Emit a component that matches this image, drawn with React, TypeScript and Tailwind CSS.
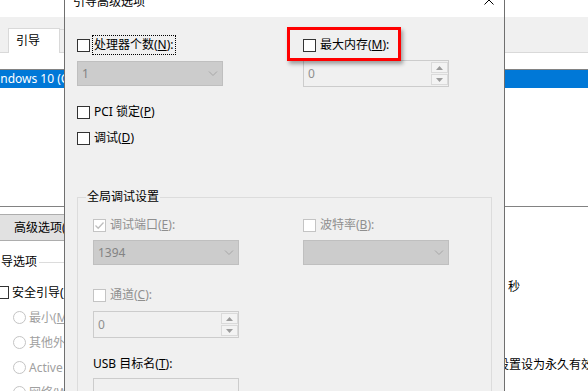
import type { ReactNode } from "react";

function Box({ disabled = false, checked = false }: { disabled?: boolean; checked?: boolean }) {
  return (
    <span
      className={`flex h-[13px] w-[13px] shrink-0 items-center justify-center border bg-white ${
        disabled ? "border-[#c4c4c4]" : "border-[#333333]"
      }`}
    >
      {checked && (
        <svg width="11" height="11" viewBox="0 0 11 11">
          <polyline points="1.5,5.5 4.2,8.2 9.5,2.5" fill="none" stroke="#bdbdbd" strokeWidth="1.3" />
        </svg>
      )}
    </span>
  );
}

function CheckRow({
  children,
  disabled = false,
  checked = false,
  focus = false,
  className = "",
}: {
  children: ReactNode;
  disabled?: boolean;
  checked?: boolean;
  focus?: boolean;
  className?: string;
}) {
  return (
    <div className={`flex h-[20px] shrink-0 items-center gap-[2px] ${className}`}>
      <Box disabled={disabled} checked={checked} />
      <span
        className={`flex h-[20px] items-center whitespace-nowrap border px-[1px] ${
          focus ? "border-dotted border-black" : "border-transparent"
        } ${disabled ? "text-[#8f8f8f]" : "text-black"}`}
      >
        {children}
      </span>
    </div>
  );
}

function Combo({ value, className = "" }: { value: string; className?: string }) {
  return (
    <div
      className={`flex h-[25px] w-[146px] shrink-0 items-center justify-between border border-[#bfbfbf] bg-[#cccccc] pl-[4px] pr-[4px] text-[#838383] ${className}`}
    >
      <span>{value}</span>
      <svg width="10" height="6" viewBox="0 0 10 6">
        <polyline points="1,0.5 5,4.5 9,0.5" fill="none" stroke="#a6a6a6" />
      </svg>
    </div>
  );
}

function Spin({ value, className = "" }: { value: string; className?: string }) {
  return (
    <div className={`flex h-[27px] w-[146px] shrink-0 border border-[#cccccc] bg-[#f0f0f0] ${className}`}>
      <span className="flex flex-1 items-center pl-[4px] text-[#8f8f8f]">{value}</span>
      <div className="flex w-[17px] flex-col gap-[1px] py-[1px]">
        <span className="flex flex-1 items-center justify-center border border-[#dadada] bg-[#f3f3f3]">
          <svg width="7" height="4" viewBox="0 0 7 4">
            <polygon points="0,4 3.5,0 7,4" fill="#9c9c9c" />
          </svg>
        </span>
        <span className="flex flex-1 items-center justify-center border border-[#dadada] bg-[#f3f3f3]">
          <svg width="7" height="4" viewBox="0 0 7 4">
            <polygon points="0,0 3.5,4 7,0" fill="#9c9c9c" />
          </svg>
        </span>
      </div>
    </div>
  );
}

function Radio({ children }: { children: ReactNode }) {
  return (
    <div className="flex h-[25px] shrink-0 items-center gap-[3px] whitespace-nowrap pl-[17px] text-[#a0a0a0]">
      <span className="h-[13px] w-[13px] shrink-0 rounded-full border border-[#c4c4c4] bg-white" />
      <span>{children}</span>
    </div>
  );
}

function MainWindow() {
  return (
    <div className="w-full bg-white">
      <div className="h-[17px] bg-white" />
      {/* tabs */}
      <div className="flex h-[36px] items-end border-b border-[#d9d9d9] bg-[#f0f0f0] pl-[8px]">
        <div className="-mb-px flex h-[25px] w-[52px] items-center border border-b-0 border-[#d9d9d9] bg-white pl-[7px]">
          引导
        </div>
        <div className="flex h-[23px] w-[50px] items-center border border-b-0 border-l-0 border-[#d9d9d9] pl-[4px]">
          服务
        </div>
      </div>
      {/* boot list */}
      <div className="pt-[16px]">
        <div className="h-[138px] border-y border-[#828282]">
          <div className="flex h-[18px] items-center whitespace-nowrap bg-[#0078d7] text-white">
            <span className="-ml-[14px]">Windows 10 (C:\WINDOWS) : 当前操作系统; 默认操作系统</span>
          </div>
        </div>
      </div>
      <div className="flex">
        <div className="w-[500px] shrink-0">
          <div className="-ml-[10px] mt-[7px] flex h-[27px] w-[130px] items-center whitespace-nowrap border border-[#adadad] bg-[#e1e1e1] pl-[23px]">
            高级选项(<u>V</u>)...
          </div>
          <fieldset className="-ml-[22px] mt-[13px] w-[400px] border border-[#dcdcdc]">
            <legend className="ml-[8px] px-[2px]">引导选项</legend>
            <div className="flex flex-col pl-[17px] pt-[10px]">
              <div className="flex h-[25px] items-center gap-[3px] whitespace-nowrap">
                <Box />
                <span>
                  安全引导(<u>F</u>)
                </span>
              </div>
              <Radio>
                最小(<u>M</u>)
              </Radio>
              <Radio>
                其他外壳(<u>L</u>)
              </Radio>
              <Radio>
                Active Directory 修复(<u>P</u>)
              </Radio>
              <Radio>
                网络(<u>W</u>)
              </Radio>
            </div>
          </fieldset>
        </div>
        <div className="whitespace-nowrap">
          <div className="mt-[70px] flex h-[20px] items-center pl-[8px]">秒</div>
          <div className="-ml-[3px] mt-[58px] flex h-[20px] items-center">设置设为永久有效</div>
        </div>
      </div>
    </div>
  );
}

function AdvancedDialog() {
  return (
    <div className="absolute left-[64px] top-0 h-[420px] w-[441px] border-x border-[#6f6f6f] bg-[#f0f0f0]">
      {/* title bar */}
      <div className="flex h-[17px] items-start justify-between overflow-hidden bg-white">
        <span className="-mt-[6px] pl-[8px]">引导高级选项</span>
        <svg className="-mt-[5px] mr-[10px]" width="10" height="10" viewBox="0 0 10 10">
          <path d="M0.5 0.5 L9.5 9.5 M9.5 0.5 L0.5 9.5" stroke="#000" strokeWidth="1" />
        </svg>
      </div>

      <div className="flex px-[12px] pt-[18px]">
        <div className="flex w-[226px] flex-col">
          <CheckRow focus>
            处理器个数(<u>N</u>):
          </CheckRow>
          <Combo className="mt-[6px]" value="1" />
          <CheckRow className="mt-[16px]">
            PCI 锁定(<u>P</u>)
          </CheckRow>
          <CheckRow className="mt-[6px]">
            调试(<u>D</u>)
          </CheckRow>
        </div>
        <div className="flex flex-col">
          <CheckRow>
            最大内存(<u>M</u>):
          </CheckRow>
          <Spin className="mt-[5px]" value="0" />
        </div>
      </div>

      <fieldset className="mx-[12px] mt-[41px] border border-[#dcdcdc]">
        <legend className="ml-[8px] px-[1px]">全局调试设置</legend>
        <div className="flex pb-[40px] pl-[15px] pt-[10px]">
          <div className="flex w-[210px] flex-col">
            <CheckRow disabled checked>
              调试端口(<u>E</u>):
            </CheckRow>
            <Combo className="mt-[5px]" value="1394" />
            <CheckRow className="mt-[20px]" disabled>
              通道(<u>C</u>):
            </CheckRow>
            <Spin className="mt-[6px]" value="0" />
            <div className="mt-[16px] flex h-[20px] items-center whitespace-nowrap">
              USB 目标名(<u>T</u>):
            </div>
            <div className="mt-[4px] h-[24px] w-[146px] border border-[#cccccc] bg-[#f0f0f0]" />
          </div>
          <div className="flex flex-col">
            <CheckRow disabled>
              波特率(<u>B</u>):
            </CheckRow>
            <Combo className="mt-[5px]" value="" />
          </div>
        </div>
      </fieldset>

      {/* red annotation box */}
      <div className="absolute left-[222px] top-[27px] h-[34px] w-[114px] border-[3px] border-[#ff0000] shadow-[2px_3px_4px_rgba(0,0,0,0.35)]" />
    </div>
  );
}

export default function App() {
  return (
    <div className="relative h-[391px] w-[588px] overflow-hidden bg-white text-[12px] leading-[16px] text-black font-['Noto_Sans','Noto_Sans_CJK_SC',sans-serif]">
      <MainWindow />
      <AdvancedDialog />
    </div>
  );
}
